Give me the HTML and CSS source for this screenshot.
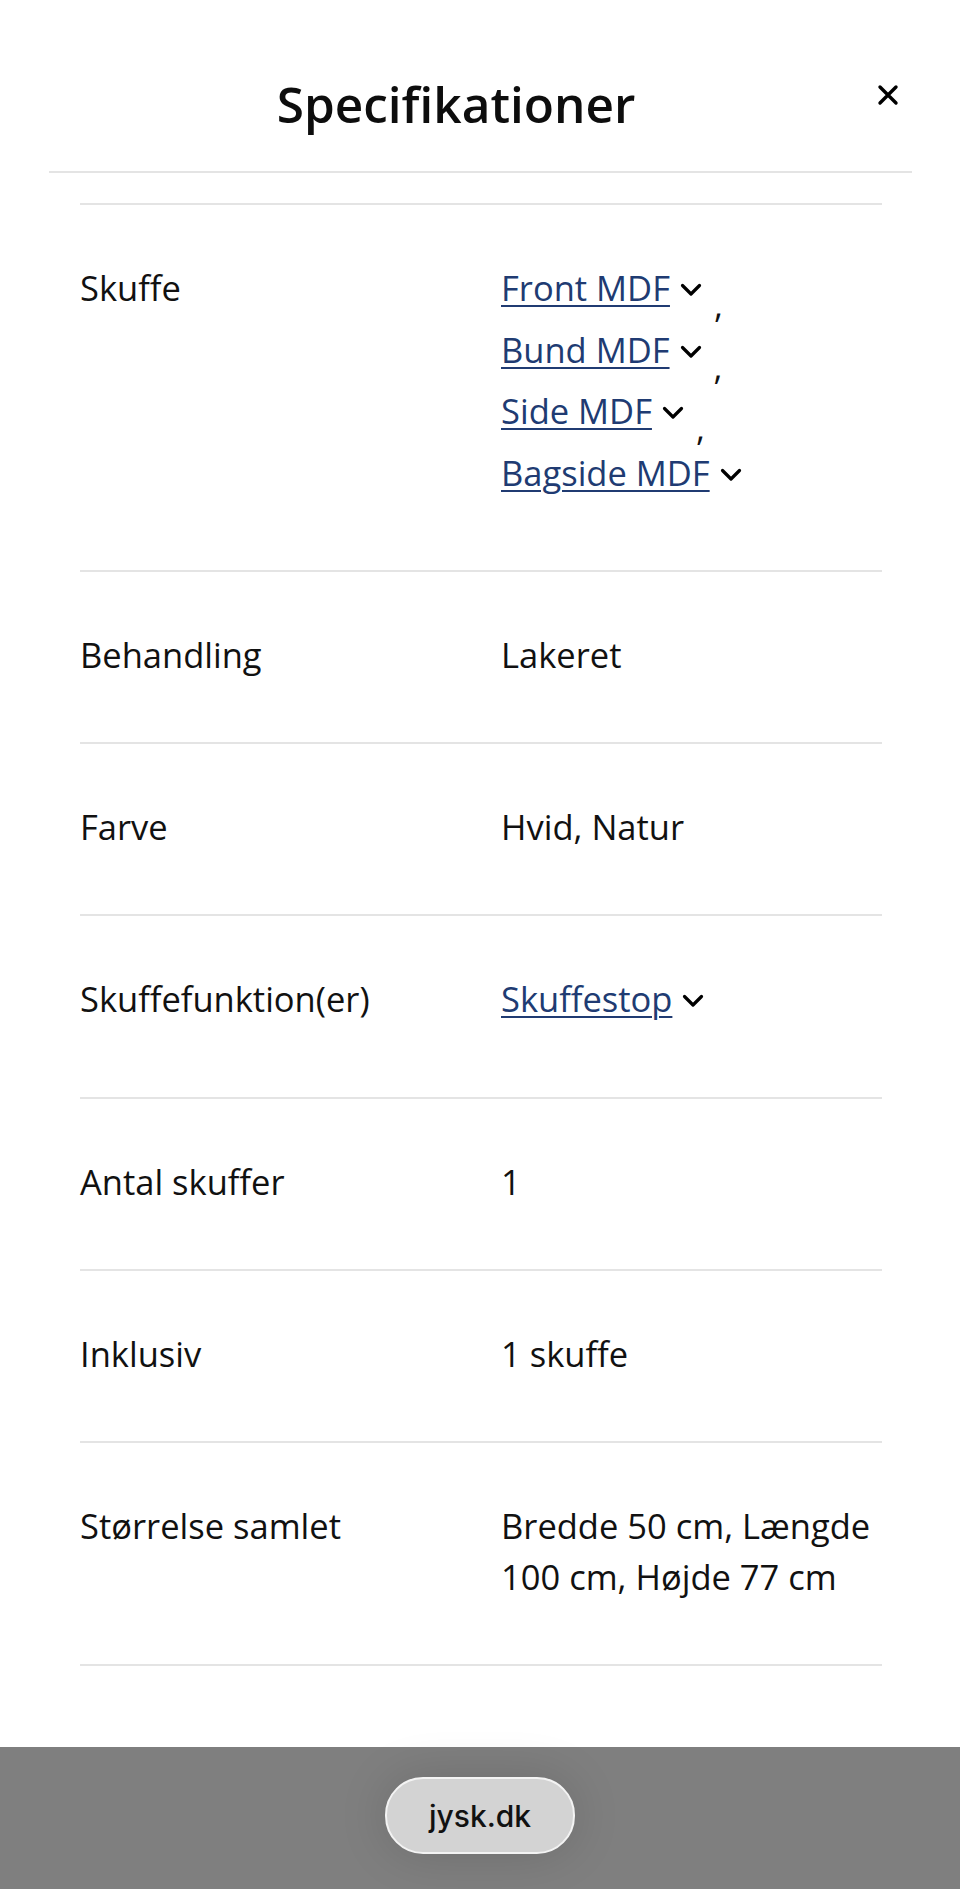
FILE: index.html
```html
<!DOCTYPE html>
<html lang="da">
<head>
<meta charset="utf-8">
<title>Specifikationer</title>
<link rel="stylesheet" href="styles.css">
</head>
<body>
<main class="sheet">
  <header class="sheet-header">
    <h1 class="sheet-title">Specifikationer</h1>
    <button class="close-btn" aria-label="Luk">
      <svg width="22" height="22" viewBox="0 0 22 22"><path d="M3 3 L19 19 M19 3 L3 19" stroke="#000" stroke-width="3.4" stroke-linecap="round" fill="none"/></svg>
    </button>
  </header>

  <div class="spec-list">
    <div class="spec-row">
      <div class="spec-label">Skuffe</div>
      <div class="spec-value">
        <div class="item"><a class="link" href="#">Front MDF</a><svg class="chev" width="22" height="14" viewBox="0 0 22 14"><path d="M2.5 2.5 L11 11 L19.5 2.5"/></svg><span class="comma">,</span></div>
        <div class="item"><a class="link" href="#">Bund MDF</a><svg class="chev" width="22" height="14" viewBox="0 0 22 14"><path d="M2.5 2.5 L11 11 L19.5 2.5"/></svg><span class="comma">,</span></div>
        <div class="item"><a class="link" href="#">Side MDF</a><svg class="chev" width="22" height="14" viewBox="0 0 22 14"><path d="M2.5 2.5 L11 11 L19.5 2.5"/></svg><span class="comma">,</span></div>
        <div class="item"><a class="link" href="#">Bagside MDF</a><svg class="chev" width="22" height="14" viewBox="0 0 22 14"><path d="M2.5 2.5 L11 11 L19.5 2.5"/></svg></div>
      </div>
    </div>
    <div class="spec-row">
      <div class="spec-label">Behandling</div>
      <div class="spec-value">Lakeret</div>
    </div>
    <div class="spec-row">
      <div class="spec-label">Farve</div>
      <div class="spec-value">Hvid, Natur</div>
    </div>
    <div class="spec-row">
      <div class="spec-label">Skuffefunktion(er)</div>
      <div class="spec-value">
        <div class="item"><a class="link" href="#">Skuffestop</a><svg class="chev" width="22" height="14" viewBox="0 0 22 14"><path d="M2.5 2.5 L11 11 L19.5 2.5"/></svg></div>
      </div>
    </div>
    <div class="spec-row">
      <div class="spec-label">Antal skuffer</div>
      <div class="spec-value">1</div>
    </div>
    <div class="spec-row">
      <div class="spec-label">Inklusiv</div>
      <div class="spec-value">1 skuffe</div>
    </div>
    <div class="spec-row spec-row-last">
      <div class="spec-label">Størrelse samlet</div>
      <div class="spec-value">Bredde 50 cm, Længde 100 cm, Højde 77 cm</div>
    </div>
  </div>
</main>

<footer class="browser-bar">
  <div class="url-pill">jysk.dk</div>
</footer>
</body>
</html>
```

FILE: styles.css
```css
html, body {
  margin: 0;
  padding: 0;
}

body {
  width: 960px;
  height: 1889px;
  overflow: hidden;
  display: flex;
  flex-direction: column;
  background: #fff;
  font-family: "Open Sans", "Noto Sans", sans-serif;
  color: #111;
}

.sheet {
  flex: 0 0 auto;
}

.sheet-header {
  display: flex;
  align-items: flex-start;
  margin: 0 48px 0 49px;
  padding: 70px 0 33px;
  border-bottom: 2px solid #e4e4e4;
}

.sheet-title {
  flex: 1;
  margin: 0;
  text-align: center;
  font-size: 49.5px;
  line-height: 68px;
  font-weight: 600;
  color: #0d0d0d;
}

.close-btn {
  flex: 0 0 49px;
  width: 49px;
  height: 49px;
  padding: 0;
  border: 0;
  background: transparent;
  display: flex;
  align-items: center;
  justify-content: center;
}

.spec-list {
  margin: 30px 78px 0 80px;
}

.spec-row {
  display: grid;
  grid-template-columns: 421px 1fr;
  border-top: 2px solid #e4e4e4;
  padding: 57px 0 62px;
  font-size: 34.5px;
  line-height: 51px;
}

.spec-row-last {
  border-bottom: 2px solid #e4e4e4;
}

.spec-label,
.spec-value {
  color: #111;
}

.item {
  display: flex;
  align-items: flex-start;
  height: 61.5px;
}

.link {
  color: #203b72;
  text-decoration: underline;
  text-decoration-thickness: 2px;
  text-underline-offset: 4px;
}

.chev {
  flex: 0 0 auto;
  margin: 21px 0 0 10px;
}

.chev path {
  fill: none;
  stroke: #000;
  stroke-width: 3.2;
  stroke-linecap: round;
  stroke-linejoin: round;
}

.comma {
  margin: 17px 0 0 12px;
  color: #111;
}

.browser-bar {
  margin-top: auto;
  height: 142px;
  box-sizing: border-box;
  padding-top: 30px;
  background: #7f7f7f;
  display: flex;
  justify-content: center;
  align-items: flex-start;
}

.url-pill {
  width: 190px;
  height: 77px;
  box-sizing: border-box;
  border: 2px solid #f3f3f3;
  border-radius: 38px;
  background: #d3d3d3;
  box-shadow: 0 0 50px rgba(0, 0, 0, 0.14);
  display: flex;
  align-items: center;
  justify-content: center;
  font-family: Inter, Roboto, "Liberation Sans", sans-serif;
  font-weight: 500;
  font-size: 30px;
  color: #111;
}
```
